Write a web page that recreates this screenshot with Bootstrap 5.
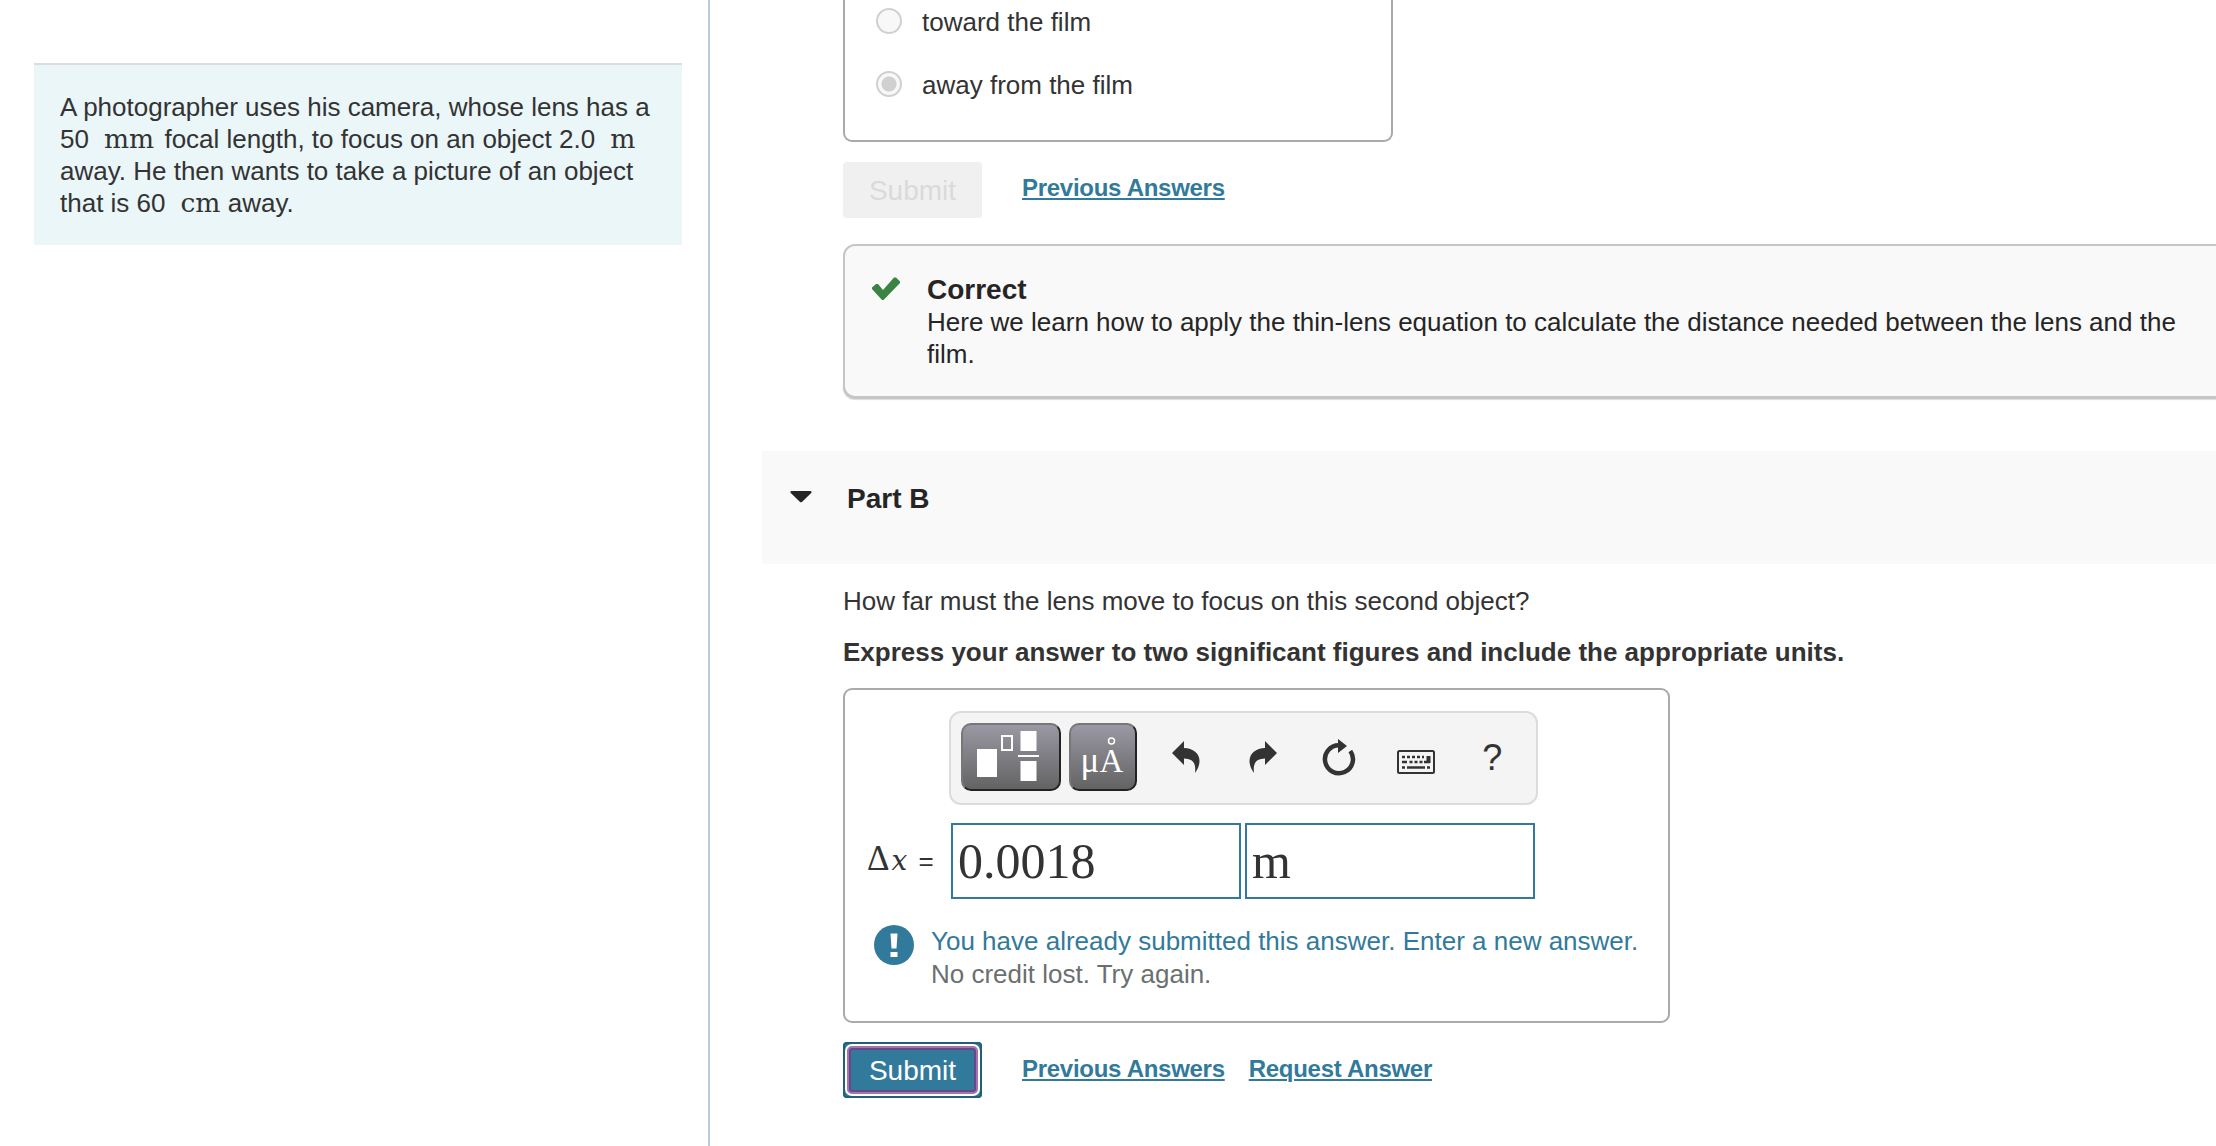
<!DOCTYPE html>
<html lang="en">
<head>
  <meta charset="UTF-8">
  <meta name="viewport" content="width=device-width, initial-scale=1.0">
  <title>Part B</title>
  <link href="https://cdn.jsdelivr.net/npm/bootstrap@5.3.0/dist/css/bootstrap.min.css" rel="stylesheet">
  <style>
    body {
      font-family: "Liberation Sans", Arial, sans-serif;
      font-size: 26px;
      line-height: 32px;
      color: #333;
      background-color: #fff;
    }
    .page {
      height: 1146px;
    }
    .sidebar {
      width: 710px;
      padding: 63px 26px 0 34px;
      border-right: 2px solid #b9cbdb;
    }
    .problem {
      padding: 26px;
      border-top: 2px solid #dddcdf;
      background-color: #eaf6f8;
      white-space: nowrap;
    }
    .unit {
      margin-left: 15px;
      font-family: "DejaVu Serif", serif;
      font-size: 26.5px;
      line-height: 0;
    }
    .content-col {
      padding-left: 133px;
      min-width: 0;
    }
    .choices {
      width: 550px;
      height: 142px;
      padding: 6px 31px 0;
      border: 2px solid #aaa;
      border-top: 0;
      border-radius: 0 0 9px 9px;
      gap: 31px;
    }
    .choices .form-check-input {
      width: 26px;
      height: 26px;
      margin: 2px 20px 0 0;
      border: 2px solid #d0d0d0;
      background-color: #f8f8f8;
      background-image: none;
      opacity: 1;
    }
    .choices .form-check-input:checked {
      background-image: radial-gradient(circle, #d0d0d0 7px, #f8f8f8 8px);
    }
    .choices .form-check-label,
    .choices .form-check-input:disabled ~ .form-check-label {
      opacity: 1;
    }
    .btn-submit {
      width: 139px;
      height: 56px;
      padding: 0;
      border: 0;
      border-radius: 4px;
      font-size: 28px;
      line-height: 57px;
      color: #fff;
      background-color: #327a9b;
    }
    .btn-submit:disabled {
      color: #dadada;
      background-color: #f0f0f0;
      opacity: 1;
    }
    .btn-focused {
      box-shadow: inset 0 0 0 2px #245f78;
      padding: 2px;
    }
    .btn-focused span {
      display: block;
      height: 52px;
      line-height: 46px;
      border: 2px solid #fff;
      border-radius: 7px;
      box-shadow: inset 0 0 0 2px #a873ac, inset 0 0 0 4px #674889;
      padding-top: 2px;
    }
    .answer-link {
      margin-top: 10px;
      font-size: 24px;
      font-weight: 700;
      letter-spacing: -.28px;
      color: #327a9b;
      text-decoration: underline;
      text-decoration-thickness: 2px;
      text-underline-offset: 2px;
    }
    .feedback {
      margin: 26px -20px 0 0;
      height: 154px;
      padding: 27px 0 0 26px;
      border: 2px solid #c6c6c6;
      border-radius: 12px;
      background-color: #f9f9f9;
      box-shadow: 0 1px 0 #c6c6c6, 0 2px 1px #ddd;
      color: #252525;
      white-space: nowrap;
    }
    .feedback h2 {
      margin: 0;
      font-size: 28px;
      font-weight: 700;
      line-height: 33px;
    }
    .part-bar {
      height: 113px;
      margin: 53px 0 0 -81px;
      padding: 31px 0 0 28px;
      background-color: #f9f9f9;
      color: #252525;
    }
    .part-bar h2 {
      margin: 0 0 0 35px;
      font-size: 28px;
      font-weight: 700;
      line-height: 33px;
    }
    .answer-box {
      width: 827px;
      height: 335px;
      margin-top: 20px;
      padding: 21px 0 0 22px;
      border: 2px solid #aaa;
      border-radius: 9px;
    }
    .math-toolbar {
      width: 589px;
      height: 94px;
      margin-left: 82px;
      padding: 10px;
      border: 2px solid #dcdcdc;
      border-radius: 12px;
      background-color: #f4f4f4;
    }
    .math-btn {
      height: 68px;
      margin-right: 8px;
      padding: 0;
      border: 2px solid;
      border-color: #777 #222 #222 #777;
      border-radius: 10px;
      background: linear-gradient(#9a98a3, #636363);
    }
    .tool {
      width: 76.5px;
      height: 68px;
      padding: 0;
      border: 0;
      color: #333;
    }
    .tool-help {
      padding-top: 2px;
      font-size: 36px;
    }
    .equation {
      margin-top: 18px;
    }
    .equation label {
      width: 84px;
      white-space: nowrap;
    }
    .equation label span {
      font-family: "Liberation Serif", serif;
      font-size: 35px;
      line-height: 0;
    }
    .equation label i {
      margin: 0 4px 0 2px;
      font-family: "DejaVu Serif", serif;
      font-size: 28px;
      line-height: 0;
    }
    .equation .form-control {
      width: 290px;
      height: 76px;
      margin-right: 4px;
      padding: 0 5px;
      border: 2px solid #327a9b;
      border-radius: 0;
      font-family: "Liberation Serif", serif;
      font-size: 50px;
      line-height: 72px;
      color: #333;
    }
    .notice {
      margin: 26px 0 0 7px;
      line-height: 33px;
      color: #327a9b;
      white-space: nowrap;
    }
    .notice-sub {
      color: #6a7070;
    }
  </style>
</head>
<body class="overflow-hidden">
  <div class="page d-flex">
    <aside class="sidebar flex-shrink-0">
      <div class="problem">
        A photographer uses his camera, whose lens has a<br>
        50<span class="unit" style="margin-right: 3px">mm</span> focal length, to focus on an object 2.0<span class="unit">m</span><br>
        away. He then wants to take a picture of an object<br>
        that is 60<span class="unit">cm</span> away.
      </div>
    </aside>

    <main class="content-col flex-grow-1">
      <!-- Part A -->
      <div class="choices d-flex flex-column">
        <div class="d-flex">
          <input class="form-check-input flex-shrink-0" type="radio" name="direction" id="toward" disabled>
          <label class="form-check-label" for="toward">toward the film</label>
        </div>
        <div class="d-flex">
          <input class="form-check-input flex-shrink-0" type="radio" name="direction" id="away" checked disabled>
          <label class="form-check-label" for="away">away from the film</label>
        </div>
      </div>
      <div class="d-flex align-items-start" style="margin-top: 20px">
        <button class="btn btn-submit" type="button" disabled>Submit</button>
        <a class="answer-link" style="margin-left: 40px" href="#">Previous Answers</a>
      </div>
      <div class="feedback d-flex">
        <svg class="flex-shrink-0" width="30" height="26" viewBox="0 0 30 26" style="margin: 3px 26px 0 0">
          <path d="M1 11.5 5 8 7 8 12 14 23 1.5 25 1.5 29 5.5 29 7 12.5 24 11 24 1 13z" fill="#3a8342"/>
        </svg>
        <div>
          <h2>Correct</h2>
          Here we learn how to apply the thin-lens equation to calculate the distance needed between the lens and the<br>film.
        </div>
      </div>

      <!-- Part B -->
      <div class="part-bar d-flex">
        <svg width="22" height="12" viewBox="0 0 22 12" style="margin-top: 9px">
          <path d="M1.5 0h19c1.2 0 1.4 1.2.7 2l-9 8.7c-.8.8-1.6.8-2.4 0l-9-8.7C.1 1.2.3 0 1.5 0z" fill="#252525"/>
        </svg>
        <h2>Part B</h2>
      </div>
      <p class="mb-0" style="margin-top: 21px">How far must the lens move to focus on this second object?</p>
      <p class="mb-0 fw-bold" style="margin-top: 19px">Express your answer to two significant figures and include the appropriate units.</p>

      <div class="answer-box">
        <div class="math-toolbar d-flex">
          <button class="btn math-btn" style="width: 100px" type="button" aria-label="Templates">
            <svg class="d-block" width="96" height="64" viewBox="0 0 96 64" fill="#fff">
              <path d="M14 24h20v28H14zM57.500 6h16v20h-16zM57.500 36h16v20h-16zM55 30h21v2H55z"/>
              <path d="M39 11h10v14H39z" fill="none" stroke="#fff" stroke-width="2"/>
            </svg>
          </button>
          <button class="btn math-btn" style="width: 68px" type="button" aria-label="Units">
            <svg class="d-block" width="64" height="64" viewBox="0 0 64 64" fill="#fff" font-family="Liberation Serif, serif">
              <text x="9.500" y="47" font-size="35">μ</text>
              <text x="28.500" y="47" font-size="33">A</text>
              <circle cx="40.500" cy="16" r="3" fill="none" stroke="#fff" stroke-width="1.500"/>
            </svg>
          </button>
          <div class="d-flex" style="margin-left: 3px">
            <button class="btn tool" type="button" aria-label="Undo">
              <svg width="28" height="32" viewBox="0 0 28 32" fill="currentColor">
                <path d="M0 12 12 0v7c9 .5 15.500 5 15.500 13 0 4-1.500 8-4.500 12 1-9-1-14-11-14.500V24z"/>
              </svg>
            </button>
            <button class="btn tool" type="button" aria-label="Redo">
              <svg width="28" height="32" viewBox="0 0 28 32" fill="currentColor">
                <path d="M28 12 16 0v7C7 7.500.5 12 .5 20c0 4 1.500 8 4.500 12-1-9 1-14 11-14.500V24z"/>
              </svg>
            </button>
            <button class="btn tool" type="button" aria-label="Reset">
              <svg width="34" height="38" viewBox="0 0 34 38">
                <path d="M17 7.200A14 14 0 1 0 28.300 13" fill="none" stroke="currentColor" stroke-width="4.500"/>
                <path d="M16 1 25 8 16 15z" fill="currentColor"/>
              </svg>
            </button>
            <button class="btn tool" type="button" aria-label="Keyboard">
              <svg width="38" height="24" viewBox="0 0 38 24" style="margin-top: 9px">
                <rect x="1" y="1" width="36" height="22" rx="1.500" fill="none" stroke="currentColor" stroke-width="2"/>
                <path d="M5 7h22" stroke="currentColor" stroke-width="2.500" stroke-dasharray="3 2"/>
                <path d="M5 12h5M12.500 12h3M17.500 12h3M22.500 12h3M27 12h6M5 17.500h3M10 17.500h18M30 17.500h3" stroke="currentColor" stroke-width="2.500"/>
                <path d="M29.500 6h4v7h-4z" fill="currentColor"/>
              </svg>
            </button>
            <button class="btn tool tool-help" type="button" aria-label="Help">?</button>
          </div>
        </div>
        <div class="equation d-flex align-items-center">
          <label for="value"><span>Δ</span><i>x</i> =</label>
          <input class="form-control" type="text" id="value" value="0.0018">
          <input class="form-control" type="text" id="units" value="m" aria-label="Units">
        </div>
        <div class="notice d-flex">
          <svg class="flex-shrink-0" width="40" height="40" viewBox="0 0 40 40" style="margin-right: 17px">
            <circle cx="20" cy="20" r="20" fill="#327a9b"/>
            <path d="M16.500 8.500h7l-1 15h-5zM16.500 27h7v5h-7z" fill="#fff"/>
          </svg>
          <div>
            You have already submitted this answer. Enter a new answer.<br>
            <span class="notice-sub">No credit lost. Try again.</span>
          </div>
        </div>
      </div>

      <div class="d-flex align-items-start" style="margin-top: 19px">
        <button class="btn btn-submit btn-focused" type="button"><span>Submit</span></button>
        <a class="answer-link" style="margin: 11px 0 0 40px" href="#">Previous Answers</a>
        <a class="answer-link" style="margin: 11px 0 0 24px" href="#">Request Answer</a>
      </div>
    </main>
  </div>
  <script src="https://cdn.jsdelivr.net/npm/bootstrap@5.3.0/dist/js/bootstrap.bundle.min.js"></script>
</body>
</html>
